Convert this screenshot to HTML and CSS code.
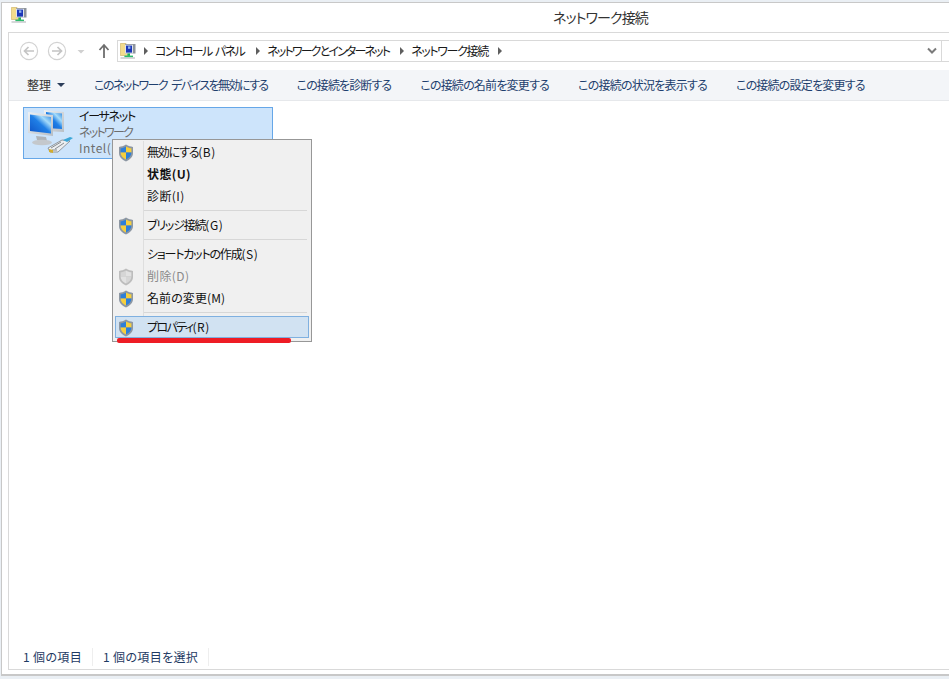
FILE: index.html
```html
<!DOCTYPE html>
<html lang="ja">
<head>
<meta charset="utf-8">
<title>ネットワーク接続</title>
<link rel="stylesheet" href="styles.css">
</head>
<body>
<svg class="defs" width="0" height="0" aria-hidden="true">
  <defs>
    <linearGradient id="scr1" x1="0" y1="1" x2="1" y2="0">
      <stop offset="0" stop-color="#0f55c8"/>
      <stop offset=".5" stop-color="#1f7fe6"/>
      <stop offset=".72" stop-color="#a6dcfa"/>
      <stop offset="1" stop-color="#2e86e0"/>
    </linearGradient>
    <linearGradient id="frm" x1="0" y1="0" x2="1" y2="1">
      <stop offset="0" stop-color="#eef1f4"/>
      <stop offset="1" stop-color="#b8bec4"/>
    </linearGradient>
    <symbol id="shield" viewBox="0 0 16 18">
      <path d="M8 .6 C5.6 2.2 3.4 2.8 1 2.9 V9 C1 13 4 15.8 8 17.4 C12 15.8 15 13 15 9 V2.9 C12.6 2.8 10.4 2.2 8 .6Z" fill="#8d97a3"/>
      <path d="M8 2.4 C6 3.6 4.4 4.1 2.6 4.3 V8.6 H8Z" fill="#2e7fd8"/>
      <path d="M8 2.4 C10 3.6 11.6 4.1 13.4 4.3 V8.6 H8Z" fill="#f6cf3e"/>
      <path d="M2.6 8.6 H8 V15.4 C5 14.2 2.6 12 2.6 8.6Z" fill="#f6cf3e"/>
      <path d="M13.4 8.6 H8 V15.4 C11 14.2 13.4 12 13.4 8.6Z" fill="#2e7fd8"/>
    </symbol>
    <symbol id="shield-off" viewBox="0 0 16 18">
      <path d="M8 .6 C5.6 2.2 3.4 2.8 1 2.9 V9 C1 13 4 15.8 8 17.4 C12 15.8 15 13 15 9 V2.9 C12.6 2.8 10.4 2.2 8 .6Z" fill="#bdbdbd"/>
      <path d="M8 2.4 C6 3.6 4.4 4.1 2.6 4.3 V8.6 H8Z" fill="#d6d6d6"/>
      <path d="M8 2.4 C10 3.6 11.6 4.1 13.4 4.3 V8.6 H8Z" fill="#e2e2e2"/>
      <path d="M2.6 8.6 H8 V15.4 C5 14.2 2.6 12 2.6 8.6Z" fill="#e2e2e2"/>
      <path d="M13.4 8.6 H8 V15.4 C11 14.2 13.4 12 13.4 8.6Z" fill="#d6d6d6"/>
    </symbol>
    <symbol id="netfolder" viewBox="0 0 16 16">
      <path d="M0.4 0.5 H6 L7 1.500 H9.500 V12.500 H0.4Z" fill="#f3dc8c" stroke="#c9ad5c" stroke-width=".6"/>
      <rect x="5" y="1" width="10.500" height="9.500" fill="#8e949c"/>
      <rect x="5" y="1.800" width="8" height="8.700" fill="#dfe3ea"/>
      <rect x="6" y="2.600" width="6" height="7" fill="#1b37b8"/>
      <rect x="8" y="3.400" width="2.400" height="2.400" fill="#8fb2ee"/>
      <rect x="7.400" y="10.500" width="2.600" height="2.400" fill="#1faf5f"/>
      <rect x="4.400" y="12.600" width="8.600" height="1.600" fill="#2dbb6c"/>
      <rect x="0.500" y="14.400" width="14.500" height="1.200" fill="#b9bdc1"/>
    </symbol>
  </defs>
</svg>
<div class="window">
  <header class="titlebar">
    <svg class="title-icon"><use href="#netfolder"/></svg>
    <h1 class="title">ネットワーク接続</h1>
  </header>
  <main class="frame">
    <div class="navrow">
      <svg class="navbtns" width="96" height="22" viewBox="0 0 96 22">
        <g fill="none" stroke="#d2d2d2" stroke-width="1.2">
          <circle cx="11" cy="11" r="8.600"/>
          <circle cx="39" cy="11" r="8.600"/>
        </g>
        <g fill="none" stroke="#c4c4c4" stroke-width="1.700">
          <path d="M16 11 H7 M10.500 7 L6.500 11 L10.500 15"/>
          <path d="M34 11 H43 M39.500 7 L43.500 11 L39.500 15"/>
        </g>
        <path d="M59.500 10 H66.500 L63 13.500Z" fill="#d0d0d0"/>
        <path d="M86 18 V6 M81.500 10 L86 5 L90.500 10" fill="none" stroke="#6e6e6e" stroke-width="1.800"/>
      </svg>
      <div class="address">
        <svg class="addr-icon"><use href="#netfolder"/></svg>
        <span class="crumb-arrow"></span><span class="crumb crumb-a">コントロール パネル</span>
        <span class="crumb-arrow"></span><span class="crumb crumb-b">ネットワークとインターネット</span>
        <span class="crumb-arrow"></span><span class="crumb crumb-c">ネットワーク接続</span>
        <span class="crumb-arrow"></span>
        <span class="addr-spacer"></span>
        <svg class="chevron" width="10" height="8" viewBox="0 0 10 8"><path d="M1 1.500 L5 5.500 L9 1.500" fill="none" stroke="#7a7a7a" stroke-width="2"/></svg>
      </div>
    </div>
    <nav class="toolbar">
      <span class="tool tool-org">整理<span class="caret"></span></span>
      <span class="tool tool-long">このネットワーク デバイスを無効にする</span>
      <span class="tool tool-short">この接続を診断する</span>
      <span class="tool tool-mid">この接続の名前を変更する</span>
      <span class="tool tool-mid">この接続の状況を表示する</span>
      <span class="tool tool-mid">この接続の設定を変更する</span>
    </nav>
    <section class="content">
      <div class="conn">
        <svg class="conn-icon" width="48" height="48" viewBox="0 0 48 48">
          <path d="M18 1 L38 3 V23 L18 22Z" fill="url(#frm)"/>
          <path d="M20 3 L36 4.500 V20 L20 19Z" fill="url(#scr1)"/>
          <path d="M2 3 L27 6 V27 L2 24Z" fill="url(#frm)"/>
          <path d="M4 5.500 L25 8 V24.500 L4 22Z" fill="url(#scr1)"/>
          <path d="M10 27 L20 28 L21 32 L11 31Z" fill="#aeb3b8"/>
          <ellipse cx="16" cy="33.500" rx="10" ry="2.800" fill="#c4c8cc"/>
          <path d="M22 39 L36 31 L44 32 L32 43 L24 43Z" fill="#eceef0" stroke="#7d8489" stroke-width=".8"/>
          <path d="M25 39 L35 33 M29 40 L38 34 M26 41 H31" stroke="#868c91" stroke-width="1"/>
          <path d="M23 40 L27 41 V44 L23 43Z" fill="#d2ac2e"/>
          <path d="M37 31 L44 28 L47 29 L41 33Z" fill="#3ba7d8"/>
        </svg>
        <div class="conn-text">
          <span class="conn-name">イーサネット</span>
          <span class="conn-sub conn-kana">ネットワーク</span>
          <span class="conn-sub conn-latin">Intel(R)</span>
        </div>
      </div>
      <ul class="menu">
        <li class="mi"><svg class="sh"><use href="#shield"/></svg><span class="ml ml-tight">無効にする<span class="mn">(B)</span></span></li>
        <li class="mi mi-bold"><span class="ml ml-wide">状態(U)</span></li>
        <li class="mi"><span class="ml ml-wide">診断(I)</span></li>
        <li class="sep"></li>
        <li class="mi"><svg class="sh"><use href="#shield"/></svg><span class="ml ml-tight">ブリッジ接続<span class="mn">(G)</span></span></li>
        <li class="sep"></li>
        <li class="mi"><span class="ml ml-tight">ショートカットの作成<span class="mn">(S)</span></span></li>
        <li class="mi mi-off"><svg class="sh"><use href="#shield-off"/></svg><span class="ml ml-wide">削除(D)</span></li>
        <li class="mi"><svg class="sh"><use href="#shield"/></svg><span class="ml ml-slight">名前の変更(M)</span></li>
        <li class="sep"></li>
        <li class="mi mi-sel"><svg class="sh"><use href="#shield"/></svg><span class="ml ml-tighter">プロパティ<span class="mn">(R)</span></span></li>
      </ul>
      <div class="underline"></div>
    </section>
    <footer class="status">
      <span class="stat">1 個の項目</span>
      <span class="stat">1 個の項目を選択</span>
    </footer>
  </main>
</div>
</body>
</html>
```
FILE: styles.css
```css
html, body { margin: 0; padding: 0; height: 679px; overflow: hidden; }
body {
  background: #eaeff4;
  font-family: "Noto Sans CJK JP", "Noto Sans", sans-serif;
  font-size: 12px;
  font-feature-settings: "palt";
  color: #1a1a1a;
}
.defs { position: absolute; }
.window {
  box-sizing: border-box;
  margin: 2px 0 0 1px;
  height: 674px;
  background: #fff;
  border-top: 1px solid #c8c8c8;
  border-left: 1px solid #c8c8c8;
  border-bottom: 2px solid #c8c8c8;
  padding: 0 0 4px 6px;
  display: flex;
  flex-direction: column;
}
.titlebar { height: 29px; display: flex; align-items: flex-start; flex: none; }
.title-icon { width: 16px; height: 16px; margin: 4px 0 0 3px; flex: none; }
.title {
  margin: 0 0 0 526px;
  font-size: 14px;
  font-weight: 400;
  line-height: 28px;
  letter-spacing: -0.9px;
  color: #333;
  white-space: nowrap;
}
.frame {
  flex: 1;
  min-height: 0;
  border-top: 1px solid #d9d9d9;
  border-left: 1px solid #d9d9d9;
  border-bottom: 1px solid #d9d9d9;
  display: flex;
  flex-direction: column;
}
.navrow { height: 37px; flex: none; display: flex; align-items: flex-start; padding-top: 7px; box-sizing: border-box; }
.navbtns { margin-left: 9px; flex: none; width: 96px; height: 22px; }
.address {
  box-sizing: border-box;
  margin-left: 3px;
  flex: 1;
  height: 22px;
  border: 1px solid #d9d9d9;
  border-right: 0;
  display: flex;
  align-items: center;
  white-space: nowrap;
  line-height: 20px;
  color: #1a1a1a;
}
.addr-icon { width: 16px; height: 16px; margin: 0 8px 0 2px; flex: none; }
.crumb-arrow {
  width: 0; height: 0; flex: none;
  border-left: 4px solid #5e5e5e;
  border-top: 4px solid transparent;
  border-bottom: 4px solid transparent;
  margin: 0 7px 0 0;
}
.crumb { margin-right: 10px; }
.crumb-a { letter-spacing: -1.55px; word-spacing: 2px; margin-right: 12px; }
.crumb-b { letter-spacing: -1.85px; margin-right: 11px; }
.crumb-c { letter-spacing: -1.35px; }
.addr-spacer { flex: 1; }
.chevron { margin-right: 4px; }
.address::after { content: ""; width: 1px; height: 20px; background: #d9d9d9; margin-right: 7px; }
.toolbar {
  height: 31px; flex: none;
  background: #f3f5f8;
  border-bottom: 1px solid #e6e8eb;
  box-sizing: border-box;
  display: flex;
  align-items: center;
  padding: 0 0 1px 3px;
  white-space: nowrap;
  color: #1e3f6e;
}
.tool { padding: 0 14.5px; line-height: 20px; }
.tool-org { color: #333; padding-left: 15px; display: flex; align-items: center; }
.tool-long { letter-spacing: -1.55px; word-spacing: 3px; }
.tool-short { letter-spacing: -0.89px; }
.tool-mid { letter-spacing: -0.78px; }
.caret {
  width: 0; height: 0; margin-left: 6px;
  border-top: 4px solid #2c3e5a;
  border-left: 4px solid transparent;
  border-right: 4px solid transparent;
}
.content { flex: 1; position: relative; min-height: 0; }
.conn {
  box-sizing: border-box;
  position: absolute;
  left: 14px; top: 6px;
  width: 250px; height: 52px;
  background: #cde4fb;
  border: 1px solid #66a7e8;
  display: flex;
  overflow: hidden;
}
.conn-icon { flex: none; margin: 1px 0 0 2px; }
.conn-text { margin-left: 5px; display: flex; flex-direction: column; line-height: 16px; white-space: nowrap; }
.conn-name { color: #111; letter-spacing: -1.3px; }
.conn-sub { color: #6d6d6d; }
.conn-kana { letter-spacing: -1.7px; }
.conn-latin { letter-spacing: 0.5px; }
.menu {
  box-sizing: border-box;
  position: absolute;
  left: 103px; top: 38px;
  width: 200px; height: 203px;
  margin: 0; padding: 1px 2px;
  list-style: none;
  background: #f0f0f0;
  border: 1px solid #979797;
  z-index: 2;
}
.menu::before {
  content: ""; position: absolute;
  left: 30px; top: 1px; bottom: 1px; width: 1px;
  background: #dedede;
}
.mi { position: relative; box-sizing: border-box; height: 22px; line-height: 22px; white-space: nowrap; color: #111; }
.ml { position: absolute; left: 32px; top: 0; }
.ml-tight { letter-spacing: -1.2px; }
.ml-tighter { letter-spacing: -1.6px; }
.ml-slight { letter-spacing: 0.1px; }
.ml-wide { letter-spacing: 0.4px; }
.mn { letter-spacing: 0.5px; }
.sh { position: absolute; left: 3px; top: 3px; width: 16px; height: 18px; }
.mi-bold { font-weight: 700; }
.mi-off { color: #8a8a8a; }
.sep { height: 7px; margin: 0 2px 0 29px; position: relative; }
.sep::after { content: ""; position: absolute; left: 0; right: 0; top: 3px; height: 1px; background: #d7d7d7; }
.mi-sel {
  background: #d1e2f2;
  outline: 1px solid #7fb0e0;
  outline-offset: -1px;
}
.underline {
  position: absolute;
  left: 108px; top: 237px;
  width: 174px; height: 4.5px;
  background: #ee1c25;
  border-radius: 2px;
  z-index: 3;
}
.status {
  height: 24px; flex: none;
  display: flex;
  align-items: center;
  padding-left: 14px;
  color: #1e3a63;
  white-space: nowrap;
  letter-spacing: 0.35px;
}
.stat { padding-right: 10px; margin-right: 10px; border-right: 1px solid #eeeeee; line-height: 18px; }
```
